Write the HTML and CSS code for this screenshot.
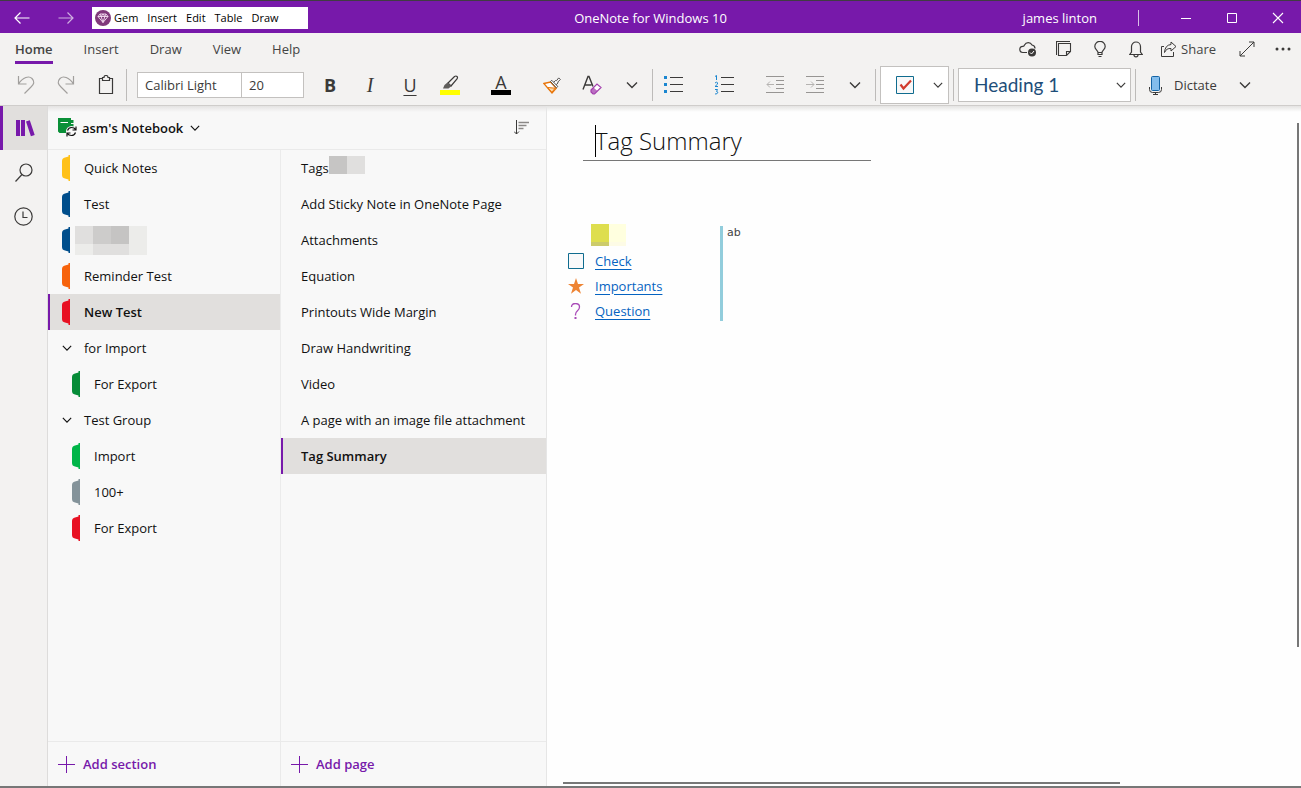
FILE: index.html
```html
<!DOCTYPE html>
<html lang="en">
<head>
<meta charset="utf-8">
<title>OneNote for Windows 10</title>
<link rel="stylesheet" href="styles.css">
</head>
<body>
<svg class="defs" aria-hidden="true">
  <symbol id="chev" viewBox="0 0 12 12"><path d="M1 3.500 6 8.500 11 3.500" fill="none" stroke="currentColor" stroke-width="1.400"/></symbol>
  <symbol id="tab" viewBox="0 0 8 26"><path d="M8 0v26H6.500V24.500L3 23.500Q0 23 0 20V6Q0 3 3 2.500l3.500-1V0z" fill="currentColor"/></symbol>
  <symbol id="plus" viewBox="0 0 17 17"><path d="M8.500 0v17M0 8.500h17" stroke="currentColor" fill="none"/></symbol>
</svg>
<div class="app">
  <header class="titlebar">
    <div class="title-left">
      <button class="nav" aria-label="Back"><svg width="16" height="12" viewBox="0 0 16 12"><path d="M15.500 6H1M6.500.5 1 6l5.500 5.500" fill="none" stroke="#fff" stroke-width="1.200"/></svg></button>
      <button class="nav dim" aria-label="Forward"><svg width="16" height="12" viewBox="0 0 16 12"><path d="M.5 6H15M9.500.5 15 6l-5.500 5.500" fill="none" stroke="#fff" stroke-width="1.200"/></svg></button>
      <nav class="gem">
        <svg width="16" height="16" viewBox="0 0 16 16"><circle cx="8" cy="8" r="8" fill="#80397b"/><path d="M5 4h6l2 2.500L8 12.500 3 6.500zM3 6.500h10M5 4l1.200 2.500L8 12.500l1.800-6L11 4M6.200 6.500 8 4l1.800 2.500" fill="none" stroke="#f5dff2" stroke-width=".9"/></svg>
        <button>Gem</button><button>Insert</button><button>Edit</button><button>Table</button><button>Draw</button>
      </nav>
    </div>
    <div class="app-name">OneNote for Windows 10</div>
    <div class="title-right">
      <span class="user">james linton</span><span class="user-sep"></span>
      <button aria-label="Minimize"><svg width="12" height="12" viewBox="0 0 12 12"><path d="M1 6.500h10" stroke="#fff"/></svg></button>
      <button aria-label="Maximize"><svg width="12" height="12" viewBox="0 0 12 12"><path d="M1.500 1.500h9v9h-9z" fill="none" stroke="#fff"/></svg></button>
      <button aria-label="Close"><svg width="12" height="12" viewBox="0 0 12 12"><path d="m1 1 10 10M11 1 1 11" stroke="#fff" stroke-width="1.100"/></svg></button>
    </div>
  </header>

  <div class="tabs">
    <nav class="tab-list">
      <button class="active">Home</button><button>Insert</button><button>Draw</button><button>View</button><button>Help</button>
    </nav>
    <div class="tab-tools">
      <button aria-label="Sync status"><svg width="18" height="16" viewBox="0 0 18 16"><path d="M8 11.500H4a3 3 0 0 1-.2-6.200Q5 5.500 5.500 4a4.200 4.200 0 0 1 7.500 0q3 .5 3 3.500" fill="none" stroke="#3b3a39" stroke-width="1.200"/><circle cx="13" cy="11.500" r="4" fill="#3b3a39"/><path d="m11 11.500 1.500 1.500 2.500-3" fill="none" stroke="#fff"/></svg></button>
      <button aria-label="Sticky notes"><svg width="16" height="16" viewBox="0 0 16 16"><path d="M2.500 2.500h12v8l-4 4h-8zM14.500 10.500h-4v4M.5 14V.5H14" fill="none" stroke="#3b3a39" stroke-width="1.100"/></svg></button>
      <button aria-label="Tell me"><svg width="12" height="17" viewBox="0 0 12 17"><path d="M4 11.500C4 9.500.8 8.500.8 5.500a5.200 5.200 0 0 1 10.400 0C11.200 8.500 8 9.500 8 11.500zM4 11.500v2h4v-2M4.500 15.500h3" fill="none" stroke="#3b3a39" stroke-width="1.200"/></svg></button>
      <button aria-label="Notifications"><svg width="14" height="17" viewBox="0 0 14 17"><path d="M.7 13.500 2.500 11V5.500a4.500 4.500 0 0 1 9 0V11l1.800 2.500zM5 14c0 2.500 4 2.500 4 0" fill="none" stroke="#3b3a39" stroke-width="1.200"/></svg></button>
      <button class="share"><svg width="16" height="16" viewBox="0 0 16 16"><path d="M3 5.500H.5v10h12V11M10 1l5 4.500-5 4.500V7.500Q5.500 7 3.500 11.500 4 4 10 3.500z" fill="none" stroke="#3b3a39"/></svg>Share</button>
      <button aria-label="Full screen"><svg width="16" height="16" viewBox="0 0 16 16"><path d="M1 15 15 1M10 1h5v5M1 10v5h5" fill="none" stroke="#3b3a39"/></svg></button>
      <button aria-label="More"><svg width="16" height="4" viewBox="0 0 16 4"><g fill="#3b3a39"><circle cx="2" cy="2" r="1.500"/><circle cx="8" cy="2" r="1.500"/><circle cx="14" cy="2" r="1.500"/></g></svg></button>
    </div>
  </div>

  <div class="toolbar">
    <div class="group lead">
      <button aria-label="Undo"><svg width="18" height="20" viewBox="0 0 18 20"><path d="M1.500 1v8h8M1.500 9C6 2 12 .5 15 3.500s2 6-1 8.500l-6.500 6.500" fill="none" stroke="#a19f9d" stroke-width="1.200"/></svg></button>
      <button aria-label="Redo"><svg width="18" height="20" viewBox="0 0 18 20"><path d="M16.500 1v8h-8M16.500 9C12 2 6 .5 3 3.500s-2 6 1 8.500l6.500 6.500" fill="none" stroke="#a19f9d" stroke-width="1.200"/></svg></button>
      <button aria-label="Paste"><svg width="16" height="20" viewBox="0 0 16 20"><path d="M5 3.500H1.500v15h13v-15H11M4.500 5.500v-3H6Q6 .5 8 .5t2 2h1.500v3z" fill="none" stroke="#3b3a39" stroke-width="1.200"/></svg></button>
    </div>
    <span class="sep"></span>
    <div class="font-box">
      <input class="font-name" type="text" aria-label="Font" value="Calibri Light">
      <input class="font-size" type="text" aria-label="Font size" value="20">
    </div>
    <div class="group">
      <button class="glyph bold">B</button>
      <button class="glyph italic">I</button>
      <button class="glyph underline">U</button>
      <button aria-label="Highlight"><svg width="20" height="20" viewBox="0 0 20 20"><path d="M0 15h20v5H0z" fill="#ff0"/><path d="m8 8 6.500-6.500q1.500-1 2.500 0t0 2.500L11 11z" fill="none" stroke="#3b3a39" stroke-width="1.200"/><path d="M7.500 7.500 4.500 10 3 13.500h5.500L11.500 11z" fill="#605e5c"/></svg></button>
      <button class="wide font-color" aria-label="Font colour"><span>A</span></button>
      <button class="wide" aria-label="Format painter"><svg width="18" height="17" viewBox="0 0 18 17"><path d="M.8 6.500 7.500 5l5.700 6.200L9 16z" fill="#fff" stroke="#e8750a" stroke-width="1.300"/><path d="m4.500 10.500 7.500.7L9 15.300z" fill="#fbd9a8" stroke="#e8750a"/><path d="m7.500 4.500 1.300-1.200 6 6.200-1.400 1.300zM10.800 5.300l1.700-1.800 1 .2L15.700.9l1.600 1.600-2.500 2.500.2 1-1.900 1.700" fill="#fff" stroke="#4f4d4b"/></svg></button>
      <button aria-label="Clear formatting"><svg width="20" height="20" viewBox="0 0 20 20"><path d="m1 14.500 5-13h1l4 10M3 10h6.500" fill="none" stroke="#3b3a39" stroke-width="1.400"/><path d="m9 15 6-6 4 3.500-6.500 6.500H11l-2-2z" fill="#fff" stroke="#a33fad" stroke-width="1.200"/><path d="m9 15 2.500-2.500 4 3.500-3 3H11l-2-2z" fill="#a33fad" opacity=".75"/></svg></button>
      <button aria-label="More font options"><svg class="chev"><use href="#chev"/></svg></button>
    </div>
    <span class="sep"></span>
    <div class="group">
      <button aria-label="Bullets"><svg width="19" height="18" viewBox="0 0 19 18"><path d="M0 0h3v3H0zM0 7h3v3H0zM0 14h3v3H0z" fill="#1a86d0"/><path d="M6 1.500h13M6 8.500h13M6 15.500h13" stroke="#3b3a39"/></svg></button>
      <button class="wide" aria-label="Numbering"><svg width="19" height="20" viewBox="0 0 19 20"><path d="M6 2.500h13M6 9.500h13M6 16.500h13" stroke="#3b3a39"/><path d="M0 1.500 1.500.5v4.500M0 8q1.500-1.500 2.500-.3T0 11.500h3M0 14.500h2.500L1.500 16.500q1.500 0 1.200 1.300T0 19" fill="none" stroke="#1a86d0"/></svg></button>
      <button class="wide" aria-label="Decrease indent"><svg width="18" height="18" viewBox="0 0 18 18"><path d="M0 .5h18M10 4.500h8M10 8.500h8M10 12.500h8M0 16.500h18" stroke="#979593"/><path d="M8 8.500H1M4 5.500l-3 3 3 3" fill="none" stroke="#b5b3b1"/></svg></button>
      <button aria-label="Increase indent"><svg width="18" height="18" viewBox="0 0 18 18"><path d="M0 .5h18M10 4.500h8M10 8.500h8M10 12.500h8M0 16.500h18" stroke="#979593"/><path d="M0 8.500h8M5 5.500l3 3-3 3" fill="none" stroke="#b5b3b1"/></svg></button>
      <button aria-label="More paragraph options"><svg class="chev"><use href="#chev"/></svg></button>
    </div>
    <span class="sep"></span>
    <button class="tag-box" aria-label="Tags">
      <svg width="18" height="18" viewBox="0 0 18 18"><path d="M.5.5h17v17H.5z" fill="#f8f8f8" stroke="#106c8f"/><path d="m4.500 8.500 3 4 7.500-8" fill="none" stroke="#d13a2c" stroke-width="2.200"/></svg>
      <svg class="chev small"><use href="#chev"/></svg>
    </button>
    <span class="sep"></span>
    <div class="style-box">
      <select aria-label="Style"><option>Heading 1</option></select>
      <svg class="chev small"><use href="#chev"/></svg>
    </div>
    <span class="sep"></span>
    <button class="dictate"><svg width="14" height="19" viewBox="0 0 14 19"><rect x="2.500" y=".5" width="8" height="14" rx="1" fill="#83bdec" stroke="#1464a5"/><path d="M.5 11v2.500q0 3 3 3h6q3 0 3-3V11M6.500 16.500v2M4 18.500h5" fill="none" stroke="#3b3a39"/></svg>Dictate</button>
    <button class="more" aria-label="Dictation options"><svg class="chev"><use href="#chev"/></svg></button>
  </div>

  <div class="workspace">
    <aside class="rail">
      <button class="active" aria-label="Notebooks"><svg width="19" height="17" viewBox="0 0 19 17"><path d="M0 0h4v16H0zM5 0h4v16H5zM10 1.500 13.800.3 18.700 15l-3.800 1.300z" fill="#7719aa"/></svg></button>
      <button aria-label="Search"><svg width="18" height="19" viewBox="0 0 18 19"><circle cx="11" cy="7" r="6" fill="none" stroke="#3b3a39" stroke-width="1.200"/><path d="m7 11.500-6.500 7" stroke="#3b3a39" stroke-width="1.200"/></svg></button>
      <button aria-label="Recent"><svg width="19" height="19" viewBox="0 0 19 19"><circle cx="9.500" cy="9.500" r="8.700" fill="none" stroke="#3b3a39" stroke-width="1.200"/><path d="M9 4.500v6h4.500" fill="none" stroke="#3b3a39" stroke-width="1.200"/></svg></button>
    </aside>

    <div class="notebook">
      <div class="notebook-head">
        <button class="notebook-name">
          <svg width="19" height="19" viewBox="0 0 19 19"><path d="M0 0h13v15H1.500L0 13.500zM13 2h2.500v3H13zM13 6h2.500v3H13z" fill="#0a9038"/><path d="M2.500 4.500h7.500" stroke="#fff"/><circle cx="13.500" cy="13.500" r="5.500" fill="#f8f8f8"/><path d="M9.500 12.500q1-3 4-3t4 2M18 8.500V12h-3.500M17.500 14.500q-1 3-4 3t-4-2M9 18.500V15h3.500" fill="none" stroke="#111" stroke-width="1.200"/></svg>
          asm's Notebook
          <svg class="chev small"><use href="#chev"/></svg>
        </button>
        <button aria-label="Sort pages"><svg width="15" height="15" viewBox="0 0 15 15"><path d="M2.500 0v14M0 11.500 2.500 14 5 11.500" fill="none" stroke="#3b3a39"/><path d="M4.500 2.500H15M4.500 5.500h8M4.500 8.500h5" stroke="#8a8886" stroke-width="1.400"/></svg></button>
      </div>
      <nav class="sections" aria-label="Sections">
        <button class="row"><svg class="tab yellow"><use href="#tab"/></svg>Quick Notes</button>
        <button class="row"><svg class="tab blue"><use href="#tab"/></svg>Test</button>
        <button class="row redacted" aria-label="Section"><svg class="tab blue"><use href="#tab"/></svg><svg width="72" height="29" viewBox="0 0 72 29"><path d="M0 0h72v29H0z" fill="#ececea"/><path d="M0 0h18v18H0z" fill="#e0dfde"/><path d="M18 0h18v18H18z" fill="#cdcccb"/><path d="M36 0h18v18H36z" fill="#c5c4c3"/><path d="M18 18h36v11H18z" fill="#e0dfde"/></svg></button>
        <button class="row"><svg class="tab orange"><use href="#tab"/></svg>Reminder Test</button>
        <button class="row selected"><svg class="tab red"><use href="#tab"/></svg>New Test</button>
        <button class="row folder"><svg class="chev small"><use href="#chev"/></svg>for Import</button>
        <button class="row child"><svg class="tab green"><use href="#tab"/></svg>For Export</button>
        <button class="row folder"><svg class="chev small"><use href="#chev"/></svg>Test Group</button>
        <button class="row child"><svg class="tab lime"><use href="#tab"/></svg>Import</button>
        <button class="row child"><svg class="tab gray"><use href="#tab"/></svg>100+</button>
        <button class="row child"><svg class="tab red"><use href="#tab"/></svg>For Export</button>
      </nav>
      <nav class="pages" aria-label="Pages">
        <button class="row">Tags<svg class="mosaic" width="36" height="18" viewBox="0 0 36 18"><path d="M0 0h18v18H0z" fill="#c6c5c4"/><path d="M18 0h18v18H18z" fill="#e0dfde"/></svg></button>
        <button class="row">Add Sticky Note in OneNote Page</button>
        <button class="row">Attachments</button>
        <button class="row">Equation</button>
        <button class="row">Printouts Wide Margin</button>
        <button class="row">Draw Handwriting</button>
        <button class="row">Video</button>
        <button class="row">A page with an image file attachment</button>
        <button class="row selected">Tag Summary</button>
      </nav>
      <button class="add"><svg width="17" height="17"><use href="#plus"/></svg>Add section</button>
      <button class="add add-page"><svg width="17" height="17"><use href="#plus"/></svg>Add page</button>
    </div>

    <main class="page">
      <div class="page-title"><input type="text" aria-label="Page title" value="Tag Summary"><span class="caret"></span></div>
      <div class="note">
        <div class="tags">
          <svg class="label" width="35" height="22" viewBox="0 0 35 22"><path d="M0 0h18v18H0z" fill="#dede4e"/><path d="M18 0h17v18H18z" fill="#ffffdf"/><path d="M0 18h18v4H0z" fill="#cccb6b"/><path d="M18 18h17v4H18z" fill="#fdfbe6"/></svg>
          <ul>
            <li><svg width="16" height="16" viewBox="0 0 16 16"><path d="M.5.5h15v15H.5z" fill="#f9f9fa" stroke="#106c8f"/></svg><a href="#check">Check</a></li>
            <li><svg width="16" height="16" viewBox="0 0 16 16"><path d="m8 0 2 6h6l-5 3.600 2 6.200-5-3.800-5 3.800 2-6.200L0 6h6z" fill="#ee8434"/></svg><a href="#importants">Importants</a></li>
            <li><svg width="16" height="16" viewBox="0 0 16 16"><path d="M3.500 4q0-3.500 4-3.500t4 3.500q0 2-2 3.700T7.500 11.500v1" fill="none" stroke="#a94bb8" stroke-width="1.300"/><path d="M6.500 14h2v2h-2z" fill="#a94bb8"/></svg><a href="#question">Question</a></li>
          </ul>
        </div>
        <div class="aside-note">ab</div>
      </div>
      <span class="scroll-v"></span>
      <span class="scroll-h"></span>
    </main>
  </div>
</div>
</body>
</html>
```
FILE: styles.css
```css
* { box-sizing: border-box; }
body {
  margin: 0;
  font-family: "Open Sans", "Noto Sans", sans-serif;
  font-size: 13px;
  line-height: 20px;
  color: #111;
}
button, input, select { font: inherit; color: inherit; background: none; border: 0; margin: 0; padding: 0; border-radius: 0; outline: 0; }
button { display: flex; align-items: center; justify-content: center; white-space: nowrap; }
svg { display: block; flex: none; }
.defs { position: absolute; width: 0; height: 0; }
.chev { width: 12px; height: 12px; }
.chev.small { width: 10px; height: 10px; }
.app { display: flex; flex-direction: column; height: 100vh; min-width: 1280px; border-bottom: 2px solid #777; }

.titlebar { display: grid; grid-template-columns: 1fr auto 1fr; flex: none; height: 33px; padding-top: 2px; background: #7719aa; border-top: 1px solid #403c42; color: #fff; }
.title-left { display: flex; align-items: center; }
.nav { width: 44px; height: 30px; }
.nav.dim { opacity: .65; }
.gem { display: flex; align-items: center; gap: 9px; width: 216px; height: 22px; margin-left: 4px; padding-left: 3px; background: #fff; color: #000; font-size: 11px; line-height: 16px; }
.gem svg { margin-right: -6px; }
.app-name { align-self: center; }
.title-right { display: flex; align-items: center; justify-content: flex-end; }
.title-right button { width: 46px; height: 30px; }
.user-sep { width: 1px; height: 16px; margin: 0 24px 0 41px; background: #d9c0e6; }

.tabs { display: flex; justify-content: space-between; flex: none; height: 32px; padding-left: 15px; background: #f3f2f1; color: #444; }
.tab-list { display: flex; gap: 31px; }
.tab-list button { border-bottom: 3px solid transparent; height: 31px; padding-top: 3px; }
.tab-list .active { font-weight: 600; border-color: #7719aa; }
.tab-tools { display: flex; align-items: center; }
.tab-tools button { width: 36px; height: 32px; }
.tab-tools .share { width: auto; gap: 4px; margin: 0 13px 0 7px; }

.toolbar { display: flex; align-items: center; flex: none; height: 41px; padding-left: 6px; background: #f3f2f1; border-bottom: 1px solid #cfcdcb; color: #3b3a39; }
.group { display: flex; }
.group button { width: 40px; height: 38px; }
.group .wide { margin-left: 11px; }
.sep { width: 1px; height: 32px; background: #bdbbb9; }
.font-box { display: flex; margin: 0 6px 0 10px; }
.font-box input { height: 26px; padding: 0 7px; border: 1px solid #c3c1bf; background: #fff; }
.font-name { width: 105px; }
.font-box .font-size { width: 62px; border-left: 0; }
.glyph { font-size: 18px; }
.bold { font-weight: 700; }
.italic { font-family: "Liberation Serif", serif; font-style: italic; font-size: 20px; }
.underline { text-decoration: underline; text-decoration-thickness: 1px; text-underline-offset: 3px; }
.font-color span { width: 20px; height: 20px; border-bottom: 5px solid #000; font-size: 18px; line-height: 14px; }
.tag-box { gap: 19px; width: 69px; height: 38px; margin: 0 4px; padding-left: 10px; background: #fff; border: 1px solid #c3c1bf; }
.style-box { position: relative; width: 173px; margin: 0 4px; }
.style-box select { appearance: none; width: 100%; height: 34px; padding: 0 15px; background: #fff; border: 1px solid #c3c1bf; color: #1e4e79; font-family: Lato, sans-serif; font-size: 19px; line-height: 28px; }
.style-box svg { position: absolute; right: 5px; top: 12px; pointer-events: none; }
.dictate { gap: 11px; margin-left: 13px; height: 38px; }
.more { width: 40px; height: 38px; margin-left: 8px; }

.workspace { display: flex; flex: 1; min-height: 0; background: linear-gradient(#e4e3e2, #fefefe 6px); }
.rail { display: flex; flex-direction: column; width: 48px; flex: none; background: linear-gradient(#e4e3e2, #f3f2f1 6px); border-right: 1px solid #dddcdb; }
.rail button { height: 44px; }
.rail .active { background: #e1dfdd; border-left: 3px solid #7719aa; }
.notebook { display: grid; grid-template: 44px 1fr 45px / 233px 265px; flex: none; background: linear-gradient(#e4e3e2, #f8f8f8 6px); border-right: 1px solid #e6e6e6; }
.notebook-head { grid-column: 1 / 3; display: flex; justify-content: space-between; padding: 0 17px 0 10px; border-bottom: 1px solid #eaeaea; }
.notebook-name { gap: 5px; font-weight: 600; }
.notebook-name .chev { margin-left: 2px; }
.sections { border-right: 1px solid #ebebeb; }
.row { width: 100%; height: 36px; justify-content: flex-start; border-left: 2px solid transparent; }
.row.selected { background: #e1dfdd; border-color: #7719aa; font-weight: 600; }
.sections .row { padding-left: 12px; gap: 14px; }
.sections .child { padding-left: 22px; }
.sections .folder { gap: 12px; }
.sections .redacted { gap: 5px; }
.pages .row { padding-left: 18px; }
.mosaic { margin-bottom: 6px; }
.tab { width: 8px; height: 26px; }
.yellow { color: #ffc119; }
.blue { color: #004e8c; }
.orange { color: #f7630c; }
.red { color: #e81123; }
.green { color: #068c38; }
.lime { color: #00b548; }
.gray { color: #84939a; }
.add { justify-content: flex-start; gap: 8px; padding-left: 10px; border-top: 1px solid #eaeaea; border-right: 1px solid #eaeaea; color: #7719aa; font-weight: 600; }
.add-page { border-right: 0; }

.page { position: relative; flex: 1; min-width: 0; padding-top: 16px; }
.page-title { position: relative; width: 288px; margin-left: 36px; border-bottom: 1px solid #777; }
.page-title input { display: block; width: 100%; height: 38px; padding: 0 0 2px 12px; font-weight: 300; font-size: 24px; }
.caret { position: absolute; left: 12px; top: 3px; width: 1px; height: 32px; background: #000; }
.note { display: flex; margin: 63px 0 0 21px; }
.tags { width: 152px; }
.label { margin-left: 23px; }
.tags ul { list-style: none; margin: 2px 0 0; padding: 0; }
.tags li { display: flex; align-items: center; gap: 11px; height: 25px; }
.tags a { color: #0563c1; text-underline-offset: 3px; }
.aside-note { height: 95px; margin-top: 2px; padding: 0 4px; border-left: 3px solid #92cddc; font-family: "DejaVu Sans", sans-serif; font-size: 11px; line-height: 14px; color: #444; }
.scroll-v { position: absolute; right: 2px; top: 17px; width: 2px; height: 524px; background: #777; }
.scroll-h { position: absolute; left: 16px; bottom: 2px; width: 557px; height: 2px; background: #777; }
```
